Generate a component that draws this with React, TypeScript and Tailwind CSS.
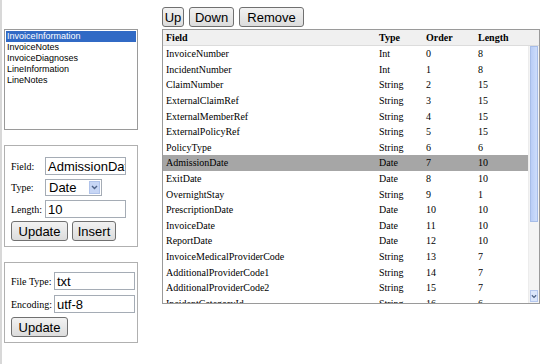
import React from "react";

const rows: [string, string, number, number][] = [
  ["InvoiceNumber", "Int", 0, 8],
  ["IncidentNumber", "Int", 1, 8],
  ["ClaimNumber", "String", 2, 15],
  ["ExternalClaimRef", "String", 3, 15],
  ["ExternalMemberRef", "String", 4, 15],
  ["ExternalPolicyRef", "String", 5, 15],
  ["PolicyType", "String", 6, 6],
  ["AdmissionDate", "Date", 7, 10],
  ["ExitDate", "Date", 8, 10],
  ["OvernightStay", "String", 9, 1],
  ["PrescriptionDate", "Date", 10, 10],
  ["InvoiceDate", "Date", 11, 10],
  ["ReportDate", "Date", 12, 10],
  ["InvoiceMedicalProviderCode", "String", 13, 7],
  ["AdditionalProviderCode1", "String", 14, 7],
  ["AdditionalProviderCode2", "String", 15, 7],
  ["IncidentCategoryId", "String", 16, 6],
];

const tables = ["InvoiceInformation", "InvoiceNotes", "InvoiceDiagnoses", "LineInformation", "LineNotes"];

const btn =
  "h-[20px] px-0 flex items-center justify-center border border-[#707070] rounded-[3px] bg-gradient-to-b from-[#f2f2f2] to-[#dcdcdc] text-[13px] leading-none text-black font-['Liberation_Sans',sans-serif]";
const input =
  "h-[18px] border border-[#a5acb5] bg-white px-[2px] text-[13px] leading-none font-['Liberation_Sans',sans-serif] overflow-hidden whitespace-nowrap flex items-center";
const label = "text-[10px] font-['Liberation_Serif',serif] text-black";

export default function App() {
  return (
    <div className="w-[540px] h-[364px] bg-white flex overflow-hidden border-l-2 border-[#d8d8d8]">
      {/* colonne gauche */}
      <div className="w-[158px] pl-[2px] pt-[29px] flex flex-col">
        <div className="w-[134px] h-[101px] border border-[#9a9a9a] bg-white p-[1px] font-['Liberation_Sans',sans-serif] text-[9px] leading-[11px]">
          {tables.map((t, i) => (
            <div key={t} className={i === 0 ? "bg-[#316ac5] text-white px-[1px]" : "text-black px-[1px]"}>
              {t}
            </div>
          ))}
        </div>

        <div className="mt-[15px] w-[134px] h-[102px] border border-[#b0b0b0] pl-[6px] pt-[11px] flex flex-col">
          <div className="flex items-center">
            <span className={label + " w-[34px]"}>Field:</span>
            <div className={input + " w-[81px]"}>AdmissionDate</div>
          </div>
          <div className="flex items-center mt-[4px]">
            <span className={label + " w-[34px]"}>Type:</span>
            <div className="w-[57px] h-[17px] border border-[#a5acb5] bg-white flex items-center text-[13px] font-['Liberation_Sans',sans-serif]">
              <span className="flex-1 pl-[3px] leading-none">Date</span>
              <span className="w-[11px] h-[13px] mr-[1px] bg-[#c7d6f5] border border-[#b0c3ea] flex items-center justify-center">
                <svg width="7" height="5" viewBox="0 0 7 5">
                  <path d="M1 1 L3.5 3.5 L6 1" stroke="#4d6185" strokeWidth="1.4" fill="none" />
                </svg>
              </span>
            </div>
          </div>
          <div className="flex items-center mt-[4px]">
            <span className={label + " w-[34px]"}>Length:</span>
            <div className={input + " w-[81px]"}>10</div>
          </div>
          <div className="flex gap-[4px] mt-[3px]">
            <button className={btn + " w-[57px]"}>Update</button>
            <button className={btn + " w-[44px]"}>Insert</button>
          </div>
        </div>

        <div className="mt-[15px] w-[134px] h-[81px] border border-[#b0b0b0] pl-[6px] pt-[9px] flex flex-col">
          <div className="flex items-center">
            <span className={label + " w-[43px]"}>File Type:</span>
            <div className={input + " w-[81px]"}>txt</div>
          </div>
          <div className="flex items-center mt-[5px]">
            <span className={label + " w-[43px]"}>Encoding:</span>
            <div className={input + " w-[81px]"}>utf-8</div>
          </div>
          <div className="flex mt-[4px]">
            <button className={btn + " w-[57px]"}>Update</button>
          </div>
        </div>
      </div>

      {/* colonne droite */}
      <div className="flex-1 flex flex-col pt-[7px] pl-[2px]">
        <div className="flex gap-[5px] h-[19px]">
          <button className={btn + " w-[22px] border-[#3c7fb1]"}>Up</button>
          <button className={btn + " w-[45px]"}>Down</button>
          <button className={btn + " w-[65px]"}>Remove</button>
        </div>
        <div className="mt-[3px] w-[378px] h-[275px] border border-[#9a9a9a] flex flex-col overflow-hidden font-['Liberation_Serif',serif] text-[10px]">
          <div className="h-[16px] bg-[#f0f0f0] border-b border-[#dcdcdc] flex items-center font-bold shrink-0">
            <span className="w-[216px] pl-[3px]">Field</span>
            <span className="w-[47px]">Type</span>
            <span className="w-[52px]">Order</span>
            <span>Length</span>
          </div>
          <div className="flex flex-1 overflow-hidden">
            <div className="flex-1 overflow-hidden">
              {rows.map(([f, t, o, l]) => (
                <div
                  key={f}
                  className={
                    "h-[15.6px] flex items-center " + (f === "AdmissionDate" ? "bg-[#a6a6a6]" : "")
                  }
                >
                  <span className="w-[216px] pl-[3px] whitespace-nowrap">{f}</span>
                  <span className="w-[47px]">{t}</span>
                  <span className="w-[52px]">{o}</span>
                  <span>{l}</span>
                </div>
              ))}
            </div>
            <div className="w-[11px] flex flex-col bg-[#f4f4f4] border-l border-[#ececec]">
              <div className="h-[176px] bg-gradient-to-r from-[#b9cdf6] to-[#cdddfb] border border-[#a7bde8] mx-[1px]" />
              <div className="flex-1" />
              <div className="h-[12px] mx-[1px] mb-[1px] bg-[#dbe6fb] border border-[#b4c7ee] flex items-center justify-center">
                <svg width="7" height="5" viewBox="0 0 7 5">
                  <path d="M1 1 L3.5 3.5 L6 1" stroke="#4d6185" strokeWidth="1.4" fill="none" />
                </svg>
              </div>
            </div>
          </div>
        </div>
      </div>
    </div>
  );
}
